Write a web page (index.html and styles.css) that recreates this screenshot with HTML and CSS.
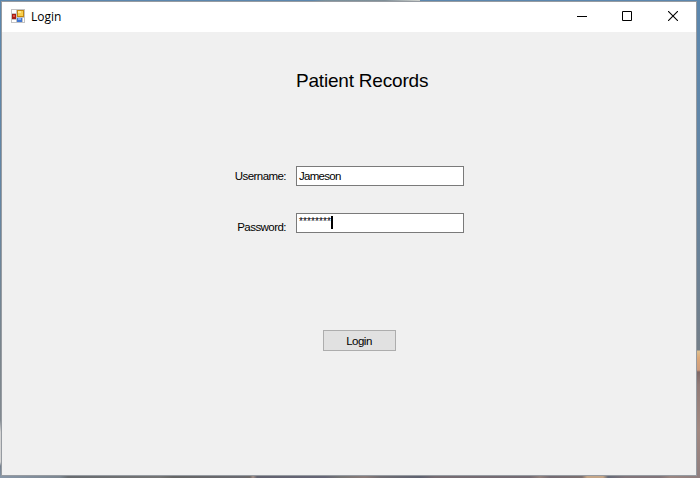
FILE: index.html
```html
<!DOCTYPE html>
<html lang="en">
<head>
<meta charset="utf-8">
<title>Login</title>
<link rel="stylesheet" href="styles.css">
</head>
<body>
<main class="window">
  <header class="titlebar">
    <svg class="app-icon" width="14" height="14" viewBox="0 0 14 14" shape-rendering="crispEdges">
      <path fill="#c3c3c3" d="M0 0h14v14H0z"/>
      <path fill="#fff" d="M1 1h4v3H1zM1 11h4v2H1zM12 9h1v4h-1z"/>
      <path fill="#c4870e" d="M6 1h7v7H6z"/>
      <path fill="#f9cf4c" d="M7 2h5v5H7z"/>
      <path fill="#ffe68b" d="M7 2h3v2H7z"/>
      <path fill="#a51d16" d="M1 5h4v5H1z"/>
      <path fill="#df5446" d="M2 6h2v2H2z"/>
      <path fill="#4277d3" d="M6 9h5v4H6z"/>
      <path fill="#83b0fa" d="M7 9h3v2H7z"/>
    </svg>
    <span class="caption">Login</span>
    <div class="controls">
      <svg width="10" height="10" viewBox="0 0 10 10" shape-rendering="crispEdges"><path fill="#000" d="M0 5h10v1H0z"/></svg>
      <svg width="10" height="10" viewBox="0 0 10 10"><path fill="none" stroke="#000" d="M.5.5h9v9h-9z"/></svg>
      <svg class="close" width="10" height="10" viewBox="0 0 10 10"><path fill="none" stroke="#000" stroke-width="1.1" d="M0 0l10 10M10 0L0 10"/></svg>
    </div>
  </header>
  <form class="content">
    <h1>Patient Records</h1>
    <div class="row user">
      <label>Username:</label>
      <div class="field"><span class="name">Jameson</span></div>
    </div>
    <div class="row pass">
      <label>Password:</label>
      <div class="field"><span class="stars">********</span><i class="caret"></i></div>
    </div>
    <button type="button"><span>Login</span></button>
  </form>
</main>
</body>
</html>
```
FILE: styles.css
```css
* { box-sizing: border-box; }
html, body { margin: 0; height: 100%; }
body {
  overflow: hidden;
  padding: 1px 3px 2px 1px;
  font: 11.5px/13px "Liberation Sans", Arial, sans-serif;
  color: #000;
  background:
    linear-gradient(90deg, transparent 312px, #78909c 325px, #7f8f98 385px, #cdd0cc 418px, #cdd0cc 420px, transparent 420px) 0 0 / 100% 1px no-repeat,
    linear-gradient(90deg, #8796a7 0, #7d8791 60px, #686c70 68px, #747474 160px, #666 173px, #6a6a70 240px, #6e6a69 250px, #a18f89 253px, #62626f 257px, #666676 325px, #757575 340px, #8a7b79 365px, #706d72 380px, #5f6270 420px, #766c72 435px, #746b73 530px, #92817d 540px, #746b73 550px, #7d706f 582px, #c4a587 587px, #c4a587 603px, #656a78 608px, #81757a 625px, #81757a 660px, #9a8681 670px, #8f7f80 100%) 0 100% / 100% 2px no-repeat,
    linear-gradient(#5b87ae 0, #6086a8 120px, #698298 250px, #747e88 350px, #dfc08f 351px, #dda878 358px, #ce9b7c 370px, #7f6967 372px, #917b77 385px, #a28981 430px, #8f7f80 100%) 100% 0 / 3px 100% no-repeat,
    linear-gradient(#5b87ae 0, #6485a3 200px, #7a858d 350px, #828a91 420px, #d4d4d4 432px, #d5d5d5 462px, #74808e 466px, #8595a6 100%) 0 0 / 1px 100% no-repeat,
    #5b87ae;
}
.window {
  width: 696px;
  height: 475px;
  border: 1px solid #969ba1;
  background: #f0f0f0;
}
.titlebar {
  display: flex;
  align-items: flex-start;
  height: 30px;
  padding-left: 9px;
  background: #fff;
}
.app-icon { margin-top: 7px; }
.caption {
  margin: 7px 0 0 6px;
  font: 12px/16px "Open Sans", sans-serif;
}
.controls {
  display: flex;
  gap: 35px;
  margin: 9px 18px 0 auto;
}
.close { margin-left: 1px; }
svg { display: block; }
.content { display: flex; flex-direction: column; }
h1 {
  margin: 38px 0 0 293px;
  padding-left: 1px;
  font-size: 19px;
  line-height: 22px;
  font-weight: 400;
  letter-spacing: -.2px;
}
.row { display: flex; height: 20px; }
.user { margin-top: 74px; }
.pass { margin-top: 27px; }
label {
  width: 284px;
  margin-right: 10px;
  padding-top: 4px;
  text-align: right;
  letter-spacing: -.55px;
}
.pass label { padding-top: 8px; }
.field {
  display: flex;
  width: 168px;
  height: 20px;
  padding: 3px 2px;
  border: 1px solid #7a7a7a;
  background: #fff;
}
.name { letter-spacing: -.72px; }
.stars { margin-top: -2px; font-size: 10px; letter-spacing: .11px; }
.caret { width: 2px; height: 13px; margin-top: -1px; background: #000; }
button {
  width: 73px;
  height: 21px;
  margin: 97px 0 0 321px;
  padding: 1px 1px 0 0;
  border: 1px solid #adadad;
  background: #e1e1e1;
  color: #000;
  font: 11.5px/13px "Liberation Sans", Arial, sans-serif;
  letter-spacing: -.5px;
}
```
